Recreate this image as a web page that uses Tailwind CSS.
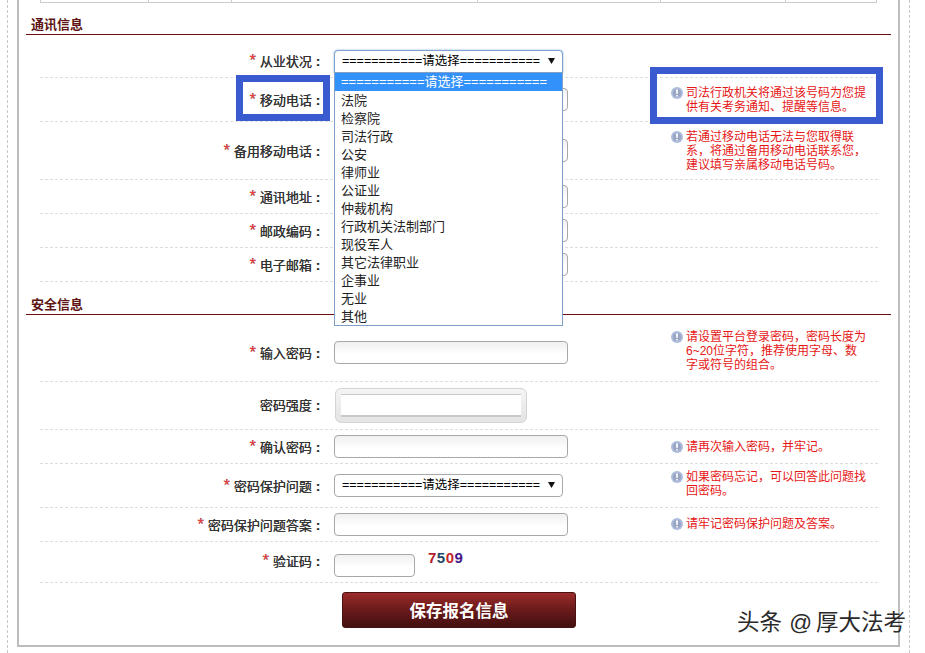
<!DOCTYPE html>
<html lang="zh-CN">
<head>
<meta charset="utf-8">
<title>报名信息</title>
<script src="https://cdn.jsdelivr.net/npm/@tailwindcss/browser@4"></script>
</head>
<body class="bg-white font-['Liberation_Sans','Noto_Sans_CJK_SC',sans-serif] text-[#333]">
<div class="relative w-[925px] h-[653px] overflow-hidden">
	<!-- dashed page frame -->
	<div class="ml-[7px] w-[903px] h-[653px] border-x border-dashed border-[#c8c8c8] pl-[9px]">
		<div class="w-[883px] h-[647px] border-x-2 border-b-2 border-[#bdbdbd] px-[7px]">
			<!-- table remains at the top -->
			<div class="flex ml-[14px] h-[3px] w-[837px] border-b border-l border-[#ccc]">
				<div class="w-[108px] border-r border-[#ccc]"></div>
				<div class="w-[83px] border-r border-[#ccc]"></div>
				<div class="w-[246px] border-r border-[#ccc]"></div>
				<div class="w-[183px] border-r border-[#ccc]"></div>
				<div class="w-[125px] border-r border-[#ccc]"></div>
				<div class="w-[91px] border-r border-[#ccc]"></div>
			</div>

			<!-- 通讯信息 -->
			<div class="h-[32px] flex items-end border-b border-[#6b1010] pl-[5px]">
				<h2 class="text-[13px] leading-[18px] font-bold text-[#5e1414]">通讯信息</h2>
			</div>
			<div class="ml-[14px] mr-[13px] text-[13px]">
				<div class="flex items-center h-[43px] pt-[10px] border-b border-dashed border-[#ddd]">
					<div class="w-[280px] pt-[2px] text-right [text-shadow:0.4px_0_0_#333]"><span class="mr-[4px] text-[16px] leading-none text-[#ee4444]">*</span>从业状况<b class="pl-[4px]">:</b></div>
					<div class="w-[351px] pl-[14px]">
						<div class="relative w-[229px] h-[23px]">
							<select class="appearance-none w-full h-full pl-[7px] text-[12.5px] text-black bg-white rounded-t-[4px] border border-[#7da2ce] shadow-[0_0_2px_#7da2ce]">
								<option>===========请选择===========</option>
							</select>
							<svg class="absolute right-[8px] top-[8px] w-[7px] h-[6px]" viewBox="0 0 7 6"><path d="M0 0h7L3.5 6z" fill="#111"/></svg>
						</div>
					</div>
				</div>
				<div class="flex items-center h-[44px] border-b border-dashed border-[#ddd]">
					<div class="w-[280px] pt-[2px] text-right [text-shadow:0.4px_0_0_#333]"><span class="mr-[4px] text-[16px] leading-none text-[#ee4444]">*</span>移动电话<b class="pl-[4px]">:</b></div>
					<div class="w-[351px] pl-[14px]"><input class="block w-[234px] h-[23px] rounded-[4px] border border-[#a8a8a8] bg-linear-to-b from-[#f0f0f0] to-white to-60%"></div>
					<div class="flex gap-[3px] w-[197px] text-[12px] leading-[14px] text-[#e61717]">
						<svg class="shrink-0 w-[12px] h-[12px] mt-[1px]" viewBox="0 0 12 12"><circle cx="6" cy="6" r="6" fill="#adbcdc"/><circle cx="6" cy="6" r="4" fill="#98a6c4"/><path d="M5 2.500h2l-.3 4.500h-1.400zM5.200 8h1.600v1.600H5.200z" fill="#fff"/></svg>
						<p class="w-[182px]">司法行政机关将通过该号码为您提供有关考务通知、提醒等信息。</p>
					</div>
				</div>
				<div class="flex items-center h-[58px] border-b border-dashed border-[#ddd]">
					<div class="w-[280px] pt-[2px] text-right [text-shadow:0.4px_0_0_#333]"><span class="mr-[4px] text-[16px] leading-none text-[#ee4444]">*</span>备用移动电话<b class="pl-[4px]">:</b></div>
					<div class="w-[351px] pl-[14px]"><input class="block w-[234px] h-[23px] rounded-[4px] border border-[#a8a8a8] bg-linear-to-b from-[#f0f0f0] to-white to-60%"></div>
					<div class="flex gap-[3px] w-[197px] text-[12px] leading-[14px] text-[#e61717]">
						<svg class="shrink-0 w-[12px] h-[12px] mt-[1px]" viewBox="0 0 12 12"><circle cx="6" cy="6" r="6" fill="#adbcdc"/><circle cx="6" cy="6" r="4" fill="#98a6c4"/><path d="M5 2.500h2l-.3 4.500h-1.400zM5.200 8h1.600v1.600H5.200z" fill="#fff"/></svg>
						<p class="w-[182px]">若通过移动电话无法与您取得联系，将通过备用移动电话联系您，建议填写亲属移动电话号码。</p>
					</div>
				</div>
				<div class="flex items-center h-[34px] border-b border-dashed border-[#ddd]">
					<div class="w-[280px] pt-[2px] text-right [text-shadow:0.4px_0_0_#333]"><span class="mr-[4px] text-[16px] leading-none text-[#ee4444]">*</span>通讯地址<b class="pl-[4px]">:</b></div>
					<div class="w-[351px] pl-[14px]"><input class="block w-[234px] h-[23px] rounded-[4px] border border-[#a8a8a8] bg-linear-to-b from-[#f0f0f0] to-white to-60%"></div>
				</div>
				<div class="flex items-center h-[34px] border-b border-dashed border-[#ddd]">
					<div class="w-[280px] pt-[2px] text-right [text-shadow:0.4px_0_0_#333]"><span class="mr-[4px] text-[16px] leading-none text-[#ee4444]">*</span>邮政编码<b class="pl-[4px]">:</b></div>
					<div class="w-[351px] pl-[14px]"><input class="block w-[234px] h-[23px] rounded-[4px] border border-[#a8a8a8] bg-linear-to-b from-[#f0f0f0] to-white to-60%"></div>
				</div>
				<div class="flex items-center h-[34px] border-b border-dashed border-[#ddd]">
					<div class="w-[280px] pt-[2px] text-right [text-shadow:0.4px_0_0_#333]"><span class="mr-[4px] text-[16px] leading-none text-[#ee4444]">*</span>电子邮箱<b class="pl-[4px]">:</b></div>
					<div class="w-[351px] pl-[14px]"><input class="block w-[234px] h-[23px] rounded-[4px] border border-[#a8a8a8] bg-linear-to-b from-[#f0f0f0] to-white to-60%"></div>
				</div>
			</div>

			<!-- 安全信息 -->
			<div class="h-[33px] flex items-end border-b border-[#6b1010] pl-[5px]">
				<h2 class="text-[13px] leading-[18px] font-bold text-[#5e1414]">安全信息</h2>
			</div>
			<div class="ml-[14px] mr-[13px] text-[13px]">
				<div class="flex items-center h-[67px] pt-[8px] border-b border-dashed border-[#ddd]">
					<div class="w-[280px] pt-[4px] text-right [text-shadow:0.4px_0_0_#333]"><span class="mr-[4px] text-[16px] leading-none text-[#ee4444]">*</span>输入密码<b class="pl-[4px]">:</b></div>
					<div class="w-[351px] pl-[14px]"><input type="password" class="block w-[234px] h-[23px] rounded-[4px] border border-[#a8a8a8] bg-linear-to-b from-[#f0f0f0] to-white to-60%"></div>
					<div class="flex gap-[3px] w-[197px] -mt-[3px] text-[12px] leading-[14px] text-[#e61717]">
						<svg class="shrink-0 w-[12px] h-[12px] mt-[1px]" viewBox="0 0 12 12"><circle cx="6" cy="6" r="6" fill="#adbcdc"/><circle cx="6" cy="6" r="4" fill="#98a6c4"/><path d="M5 2.500h2l-.3 4.500h-1.400zM5.200 8h1.600v1.600H5.200z" fill="#fff"/></svg>
						<p class="w-[182px]">请设置平台登录密码，密码长度为6~20位字符，推荐使用字母、数字或符号的组合。</p>
					</div>
				</div>
				<div class="flex items-center h-[48px] border-b border-dashed border-[#ddd]">
					<div class="w-[280px] text-right [text-shadow:0.4px_0_0_#333]">密码强度<b class="pl-[4px]">:</b></div>
					<div class="w-[351px] pl-[15px]">
						<div class="w-[192px] h-[35px] rounded-[6px] border border-[#d4d4d4] bg-linear-to-b from-[#f4f4f4] to-[#e4e4e4] pt-[5px] px-[5px]">
							<div class="h-[23px] bg-white border-t border-b-2 border-[#c8c8c8]"></div>
						</div>
					</div>
				</div>
				<div class="flex items-center h-[34px] border-b border-dashed border-[#ddd]">
					<div class="w-[280px] pt-[2px] text-right [text-shadow:0.4px_0_0_#333]"><span class="mr-[4px] text-[16px] leading-none text-[#ee4444]">*</span>确认密码<b class="pl-[4px]">:</b></div>
					<div class="w-[351px] pl-[14px]"><input type="password" class="block w-[234px] h-[23px] rounded-[4px] border border-[#a8a8a8] bg-linear-to-b from-[#f0f0f0] to-white to-60%"></div>
					<div class="flex gap-[3px] w-[197px] text-[12px] leading-[14px] text-[#e61717]">
						<svg class="shrink-0 w-[12px] h-[12px] mt-[1px]" viewBox="0 0 12 12"><circle cx="6" cy="6" r="6" fill="#adbcdc"/><circle cx="6" cy="6" r="4" fill="#98a6c4"/><path d="M5 2.500h2l-.3 4.500h-1.400zM5.200 8h1.600v1.600H5.200z" fill="#fff"/></svg>
						<p class="w-[182px]">请再次输入密码，并牢记。</p>
					</div>
				</div>
				<div class="flex items-center h-[44px] border-b border-dashed border-[#ddd]">
					<div class="w-[280px] pt-[2px] text-right [text-shadow:0.4px_0_0_#333]"><span class="mr-[4px] text-[16px] leading-none text-[#ee4444]">*</span>密码保护问题<b class="pl-[4px]">:</b></div>
					<div class="w-[351px] pl-[14px]">
						<div class="relative w-[229px] h-[23px]">
							<select class="appearance-none w-full h-full pl-[7px] text-[12.5px] text-black bg-white rounded-[4px] border border-[#a8a8a8]">
								<option>===========请选择===========</option>
							</select>
							<svg class="absolute right-[8px] top-[8px] w-[7px] h-[6px]" viewBox="0 0 7 6"><path d="M0 0h7L3.5 6z" fill="#111"/></svg>
						</div>
					</div>
					<div class="flex gap-[3px] w-[197px] -mt-[3px] text-[12px] leading-[14px] text-[#e61717]">
						<svg class="shrink-0 w-[12px] h-[12px] mt-[1px]" viewBox="0 0 12 12"><circle cx="6" cy="6" r="6" fill="#adbcdc"/><circle cx="6" cy="6" r="4" fill="#98a6c4"/><path d="M5 2.500h2l-.3 4.500h-1.400zM5.200 8h1.600v1.600H5.200z" fill="#fff"/></svg>
						<p class="w-[182px]">如果密码忘记，可以回答此问题找回密码。</p>
					</div>
				</div>
				<div class="flex items-center h-[34px] border-b border-dashed border-[#ddd]">
					<div class="w-[280px] pt-[2px] text-right [text-shadow:0.4px_0_0_#333]"><span class="mr-[4px] text-[16px] leading-none text-[#ee4444]">*</span>密码保护问题答案<b class="pl-[4px]">:</b></div>
					<div class="w-[351px] pl-[14px]"><input class="block w-[234px] h-[23px] rounded-[4px] border border-[#a8a8a8] bg-linear-to-b from-[#f0f0f0] to-white to-60%"></div>
					<div class="flex gap-[3px] w-[197px] -mt-[1px] text-[12px] leading-[14px] text-[#e61717]">
						<svg class="shrink-0 w-[12px] h-[12px] mt-[1px]" viewBox="0 0 12 12"><circle cx="6" cy="6" r="6" fill="#adbcdc"/><circle cx="6" cy="6" r="4" fill="#98a6c4"/><path d="M5 2.500h2l-.3 4.500h-1.400zM5.200 8h1.600v1.600H5.200z" fill="#fff"/></svg>
						<p class="w-[182px]">请牢记密码保护问题及答案。</p>
					</div>
				</div>
				<div class="flex items-center h-[41px] border-b border-dashed border-[#ddd]">
					<div class="w-[280px] text-right [text-shadow:0.4px_0_0_#333]"><span class="mr-[4px] text-[16px] leading-none text-[#ee4444]">*</span>验证码<b class="pl-[4px]">:</b></div>
					<div class="flex items-start pl-[14px]">
						<input class="block w-[81px] h-[23px] mt-[6px] rounded-[4px] border border-[#a8a8a8] bg-linear-to-b from-[#f0f0f0] to-white to-60%">
						<div class="ml-[13px] mt-[1px] text-[15px] leading-[18px] font-bold tracking-[0.5px]"><span class="text-[#b3202a]">7</span><span class="text-[#1f4a66]">5</span><span class="text-[#c4262c]">0</span><span class="text-[#46178a]">9</span></div>
					</div>
				</div>
			</div>

			<div class="pt-[9px] pl-[316px]">
				<button class="block w-[234px] h-[36px] pt-[3px] rounded-[3px] border border-[#4a1212] bg-linear-to-b from-[#9c2c2c] via-[#6a1a1a] to-[#431010] text-white text-[16.5px] font-bold">保存报名信息</button>
			</div>
		</div>
	</div>

	<!-- open select list -->
	<ul class="absolute left-[334px] top-[72px] w-[229px] h-[254px] bg-white border border-[#7f9fc6] text-[13px] leading-[19px] text-[#222]">
		<li class="h-[18px] pl-[6px] leading-[18px] bg-[#3391fb] text-white">===========请选择===========</li>
		<li class="h-[18px] pl-[6px]">法院</li>
		<li class="h-[18px] pl-[6px]">检察院</li>
		<li class="h-[18px] pl-[6px]">司法行政</li>
		<li class="h-[18px] pl-[6px]">公安</li>
		<li class="h-[18px] pl-[6px]">律师业</li>
		<li class="h-[18px] pl-[6px]">公证业</li>
		<li class="h-[18px] pl-[6px]">仲裁机构</li>
		<li class="h-[18px] pl-[6px]">行政机关法制部门</li>
		<li class="h-[18px] pl-[6px]">现役军人</li>
		<li class="h-[18px] pl-[6px]">其它法律职业</li>
		<li class="h-[18px] pl-[6px]">企事业</li>
		<li class="h-[18px] pl-[6px]">无业</li>
		<li class="h-[18px] pl-[6px]">其他</li>
	</ul>

	<!-- blue annotation boxes -->
	<div class="absolute left-[236px] top-[75px] w-[94px] h-[46px] border-[7px] border-[#3a5bd0]"></div>
	<div class="absolute left-[650px] top-[67px] w-[233px] h-[57px] border-[7px] border-[#3a5bd0]"></div>

	<!-- watermark -->
	<div class="absolute left-[737px] top-[607px] text-[22.5px] leading-[32px] whitespace-nowrap text-[#2a2a2a] [text-shadow:0_0_2px_#fff]">头条 <span class="ml-[1px] tracking-[4px]">@</span>厚大法考</div>
</div>
</body>
</html>
